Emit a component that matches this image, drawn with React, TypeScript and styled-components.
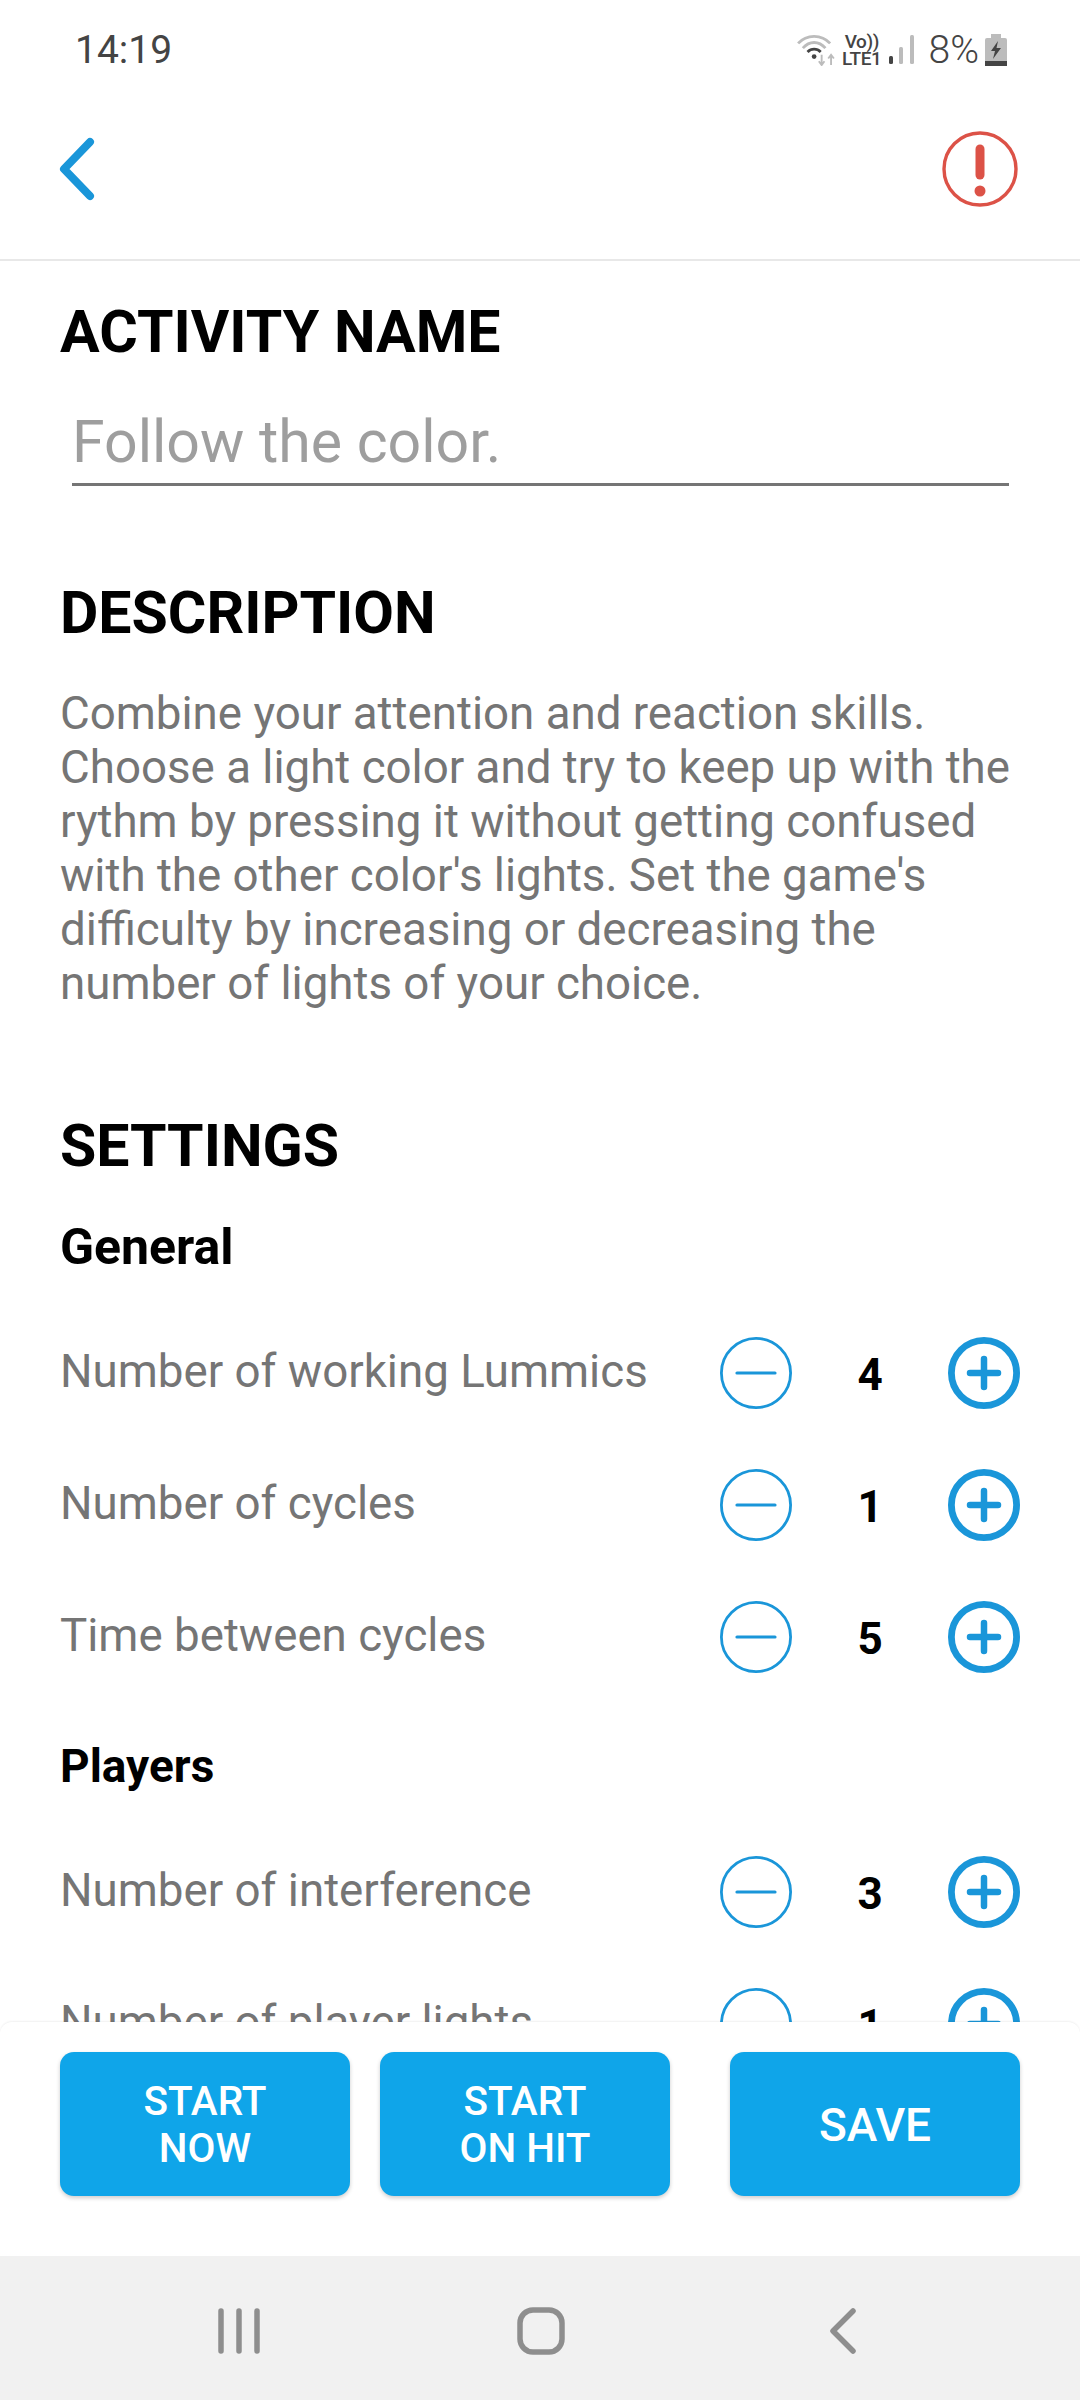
import React from "react";
import styled, { createGlobalStyle } from "styled-components";

const GlobalStyle = createGlobalStyle`
  html, body { margin: 0; padding: 0; background: #f1f1f1; }
  * { box-sizing: border-box; }
`;

type RowData = { label: string; value: number };

const general: RowData[] = [
  { label: "Number of working Lummics", value: 4 },
  { label: "Number of cycles", value: 1 },
  { label: "Time between cycles", value: 5 },
];

const players: RowData[] = [
  { label: "Number of interference", value: 3 },
  { label: "Number of player lights", value: 1 },
];

function Stepper({ value }: { value: number }) {
  return (
    <StepperWrap>
      <StepIcon viewBox="0 0 72 72">
        <circle cx="36" cy="36" r="34.6" fill="none" stroke="#1a96d9" strokeWidth="2.8" />
        <line x1="17" y1="36" x2="55" y2="36" stroke="#1a96d9" strokeWidth="3.2" strokeLinecap="round" />
      </StepIcon>
      <StepValue>{value}</StepValue>
      <StepIcon viewBox="0 0 72 72">
        <circle cx="36" cy="36" r="32.6" fill="none" stroke="#1a96d9" strokeWidth="6.8" />
        <path d="M22 36H50M36 22V50" stroke="#1a96d9" strokeWidth="6.5" strokeLinecap="round" />
      </StepIcon>
    </StepperWrap>
  );
}

function SettingRow({ label, value }: RowData) {
  return (
    <Row>
      <RowLabel>{label}</RowLabel>
      <Stepper value={value} />
    </Row>
  );
}

export default function App() {
  return (
    <>
      <GlobalStyle />
      <Screen>
        <StatusBar>
          <Clock>14:19</Clock>
          <StatusIcons>
            <svg width="40" height="32" viewBox="0 0 42 34">
              <path d="M2 10C11 0 27 0 36 10" fill="none" stroke="#bcbcbc" strokeWidth="3" />
              <path d="M7 15C14 7 24 7 31 15" fill="none" stroke="#bcbcbc" strokeWidth="3" />
              <path d="M12 19C16 15 22 15 26 19" fill="none" stroke="#444" strokeWidth="3" />
              <circle cx="19" cy="24" r="2.5" fill="#444" />
              <path d="M27 22V33M24 29L27 33L30 29" fill="none" stroke="#bcbcbc" strokeWidth="2" />
              <path d="M37 33V22M34 26L37 22L40 26" fill="none" stroke="#bcbcbc" strokeWidth="2" />
            </svg>
            <NetworkLabel>
              <span>Vo))</span>
              <span>LTE1</span>
            </NetworkLabel>
            <svg width="27" height="30" viewBox="0 0 27 30">
              <rect x="1" y="21" width="4" height="8" rx="1.5" fill="#444" />
              <rect x="11" y="12" width="4" height="17" rx="1.5" fill="#bcbcbc" />
              <rect x="22" y="0" width="4" height="29" rx="1.5" fill="#bcbcbc" />
            </svg>
            <Battery>8%</Battery>
            <svg width="22" height="32" viewBox="0 0 22 32">
              <rect x="6" y="0" width="10" height="4" fill="#bcbcbc" />
              <rect x="0" y="4" width="22" height="28" rx="2" fill="#bcbcbc" />
              <rect x="0" y="27" width="22" height="5" fill="#444" />
              <path d="M13 7L6 17H10L8 25L16 14H11.5Z" fill="#444" />
            </svg>
          </StatusIcons>
        </StatusBar>
        <Header>
          <svg width="40" height="66" viewBox="0 0 40 66">
            <path d="M33 6L7 33L33 60" fill="none" stroke="#1a96d9" strokeWidth="8" strokeLinecap="round" strokeLinejoin="round" />
          </svg>
          <svg width="76" height="76" viewBox="0 0 76 76">
            <circle cx="38" cy="38" r="36" fill="none" stroke="#dc5247" strokeWidth="3.4" />
            <line x1="38" y1="18" x2="38" y2="44" stroke="#dc5247" strokeWidth="9" strokeLinecap="round" />
            <circle cx="38" cy="60" r="5.5" fill="#dc5247" />
          </svg>
        </Header>
        <Content>
          <SectionTitle $top={0}>ACTIVITY NAME</SectionTitle>
          <NameField>Follow the color.</NameField>
          <SectionTitle $top={94}>DESCRIPTION</SectionTitle>
          <Description>
            Combine your attention and reaction skills.
            <br />
            Choose a light color and try to keep up with the
            <br />
            rythm by pressing it without getting confused
            <br />
            with the other color's lights. Set the game's
            <br />
            difficulty by increasing or decreasing the
            <br />
            number of lights of your choice.
          </Description>
          <SectionTitle $top={102}>SETTINGS</SectionTitle>
          <GroupTitle $top={38} $size={50}>General</GroupTitle>
          {general.map((r) => (
            <SettingRow key={r.label} {...r} />
          ))}
          <GroupTitle $top={33} $size={46}>Players</GroupTitle>
          {players.map((r) => (
            <SettingRow key={r.label} {...r} />
          ))}
        </Content>
        <Footer>
          <ActionButton>
            START
            <br />
            NOW
          </ActionButton>
          <ActionButton>
            START
            <br />
            ON HIT
          </ActionButton>
          <ActionButton $large>SAVE</ActionButton>
        </Footer>
        <NavBar>
          <svg width="42" height="46" viewBox="0 0 42 46">
            <path d="M3 3V43M21 3V43M39 3V43" stroke="#8e8e8e" strokeWidth="5.5" strokeLinecap="round" />
          </svg>
          <svg width="48" height="48" viewBox="0 0 48 48">
            <rect x="3" y="3" width="42" height="42" rx="13" fill="none" stroke="#8e8e8e" strokeWidth="5.5" />
          </svg>
          <svg width="28" height="46" viewBox="0 0 28 46">
            <path d="M24 3L4 23L24 43" fill="none" stroke="#8e8e8e" strokeWidth="5.5" strokeLinecap="round" strokeLinejoin="round" />
          </svg>
        </NavBar>
      </Screen>
    </>
  );
}

const Screen = styled.div`
  width: 1080px;
  height: 2400px;
  display: flex;
  flex-direction: column;
  background: #fff;
  font-family: Roboto, "Liberation Sans", sans-serif;
  overflow: hidden;
`;

const StatusBar = styled.div`
  height: 90px;
  flex: none;
  display: flex;
  align-items: center;
  justify-content: space-between;
  padding: 10px 73px 0 75px;
`;

const Clock = styled.span`
  font-size: 39px;
  color: #444;
`;

const StatusIcons = styled.div`
  display: flex;
  align-items: center;
  gap: 6px;
`;

const NetworkLabel = styled.div`
  display: flex;
  flex-direction: column;
  align-items: center;
  font-size: 19px;
  line-height: 17px;
  letter-spacing: -0.4px;
  font-weight: 500;
  color: #444;
`;

const Battery = styled.span`
  font-size: 39px;
  font-weight: 300;
  color: #444;
  margin-left: 8px;
`;

const Header = styled.div`
  height: 171px;
  flex: none;
  display: flex;
  align-items: center;
  justify-content: space-between;
  padding: 0 62px 11px 57px;
  border-bottom: 2px solid #e8e8e8;
`;

const Content = styled.div`
  flex: 1;
  min-height: 0;
  overflow: hidden;
  padding: 38px 60px 0;
`;

const SectionTitle = styled.h2<{ $top: number }>`
  margin: ${(p) => p.$top}px 0 0;
  font-size: 59px;
  line-height: 66px;
  font-weight: 700;
  color: #000;
`;

const NameField = styled.div`
  margin: 45px 11px 0 12px;
  padding-bottom: 9px;
  font-size: 59px;
  line-height: 64px;
  color: #9e9e9e;
  border-bottom: 3px solid #757575;
`;

const Description = styled.p`
  margin: 41px 0 0;
  font-size: 45.7px;
  line-height: 54px;
  color: #757575;
`;

const GroupTitle = styled.h3<{ $top: number; $size: number }>`
  margin: ${(p) => p.$top}px 0 30px;
  font-size: ${(p) => p.$size}px;
  line-height: 60px;
  font-weight: 700;
  color: #000;
`;

const Row = styled.div`
  height: 132px;
  display: flex;
  align-items: center;
  justify-content: space-between;
`;

const RowLabel = styled.span`
  font-size: 45.7px;
  color: #757575;
  padding-bottom: 3px;
`;

const StepperWrap = styled.div`
  display: flex;
  align-items: center;
  width: 300px;
  justify-content: space-between;
`;

const StepIcon = styled.svg`
  width: 72px;
  height: 72px;
  flex: none;
`;

const StepValue = styled.span`
  font-size: 44px;
  font-weight: 700;
  color: #000;
  padding-top: 4px;
`;

const Footer = styled.div`
  height: 234px;
  flex: none;
  display: flex;
  align-items: flex-start;
  padding: 30px 60px 0;
  border-radius: 12px 12px 0 0;
  box-shadow: 0 -1px 2px rgba(0, 0, 0, 0.06);
  background: #fff;
  position: relative;
`;

const ActionButton = styled.button<{ $large?: boolean }>`
  width: 290px;
  height: 144px;
  border: none;
  border-radius: 14px;
  background: #0fa5e9;
  color: #fff;
  font-family: inherit;
  font-size: ${(p) => (p.$large ? "46px" : "40.5px")};
  line-height: 47px;
  font-weight: 500;
  padding: 2px 0 0;
  margin-right: 30px;
  margin-left: ${(p) => (p.$large ? "30px" : "0")};
  box-shadow: 0 2px 4px rgba(0, 0, 0, 0.2);
  &:last-child {
    margin-right: 0;
  }
`;

const NavBar = styled.div`
  height: 144px;
  flex: none;
  background: #f1f1f1;
  display: grid;
  grid-template-columns: repeat(3, 302px);
  justify-content: center;
  justify-items: center;
  align-items: center;
  padding: 6px 0 0 2px;
`;
